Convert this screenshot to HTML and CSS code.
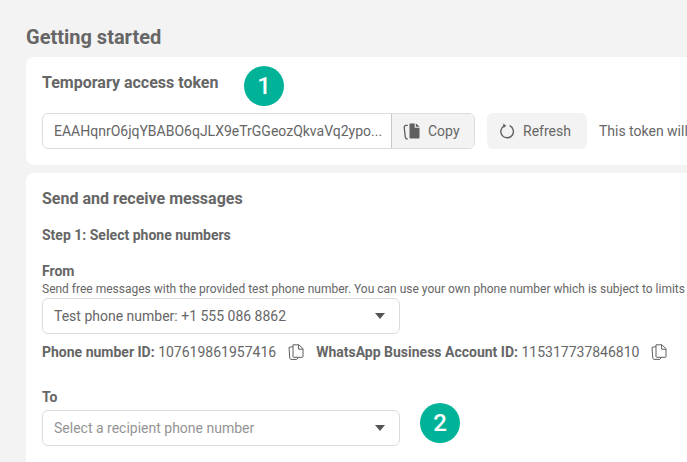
FILE: index.html
```html
<!DOCTYPE html>
<html lang="en">
<head>
    <meta charset="UTF-8">
    <meta name="viewport" content="width=device-width, initial-scale=1.0">
    <title>Getting started</title>
    <link rel="stylesheet" href="styles.css">
</head>
<body>
    <div class="page">
        <h1 class="page-title">Getting started</h1>

        <section class="card token-card">
            <h2 class="card-title">Temporary access token</h2>
            <div class="token-row">
                <div class="token-group">
                    <div class="token-value">EAAHqnrO6jqYBABO6qJLX9eTrGGeozQkvaVq2ypo...</div>
                    <button class="copy-btn">
                        <svg class="btn-icon" width="18" height="18" viewBox="0 0 18 18">
                            <path d="M6.5 1.5h5.2v4.2h4.8V15.5a1 1 0 0 1-1 1H7.5a1 1 0 0 1-1-1z" fill="#5f5f5f"/>
                            <path d="M12.8 1.2l3.9 3.5h-3.9z" fill="#5f5f5f"/>
                            <path d="M4.8 3.4H2.4L1.2 5l1.1 10.2 1 1.6h1.5" fill="none" stroke="#5f5f5f" stroke-width="1.3"/>
                        </svg>
                        Copy
                    </button>
                </div>
                <button class="refresh-btn">
                    <svg class="btn-icon" width="16" height="16" viewBox="0 0 16 16">
                        <path d="M5.2 2.9A6.3 6.3 0 1 0 10.6 2.7" fill="none" stroke="#5f5f5f" stroke-width="1.4"/>
                        <path d="M4.2 0.6l3 2.1-2.6 2.3z" fill="#5f5f5f"/>
                    </svg>
                    Refresh
                </button>
                <span class="token-note">This token will</span>
            </div>
            <div class="badge badge-one">1</div>
        </section>

        <section class="card send-card">
            <h2 class="card-title">Send and receive messages</h2>
            <h3 class="step-title">Step 1: Select phone numbers</h3>

            <label class="field-label from-label">From</label>
            <p class="field-help">Send free messages with the provided test phone number. You can use your own phone number which is subject to limits</p>
            <div class="select">
                <span>Test phone number: +1 555 086 8862</span>
                <span class="caret"></span>
            </div>

            <div class="id-row">
                <span class="id-item"><b>Phone number ID:</b> 107619861957416</span>
                <svg class="id-icon" width="16" height="16" viewBox="0 0 16 16">
                    <path d="M5 .8h6l4 4v7.8a.7.7 0 0 1-.7.7H5.7a.7.7 0 0 1-.7-.7z" fill="none" stroke="#5f5f5f" stroke-linejoin="round"/>
                    <path d="M10.6 .8v4.4h4.4" fill="none" stroke="#5f5f5f"/>
                    <path d="M5 2.6L1 3.4l.8 10.8.9 1.2h6l1.6-2" fill="none" stroke="#5f5f5f" stroke-linejoin="round"/>
                </svg>
                <span class="id-item"><b>WhatsApp Business Account ID:</b> 115317737846810</span>
                <svg class="id-icon" width="16" height="16" viewBox="0 0 16 16">
                    <path d="M5 .8h6l4 4v7.8a.7.7 0 0 1-.7.7H5.7a.7.7 0 0 1-.7-.7z" fill="none" stroke="#5f5f5f" stroke-linejoin="round"/>
                    <path d="M10.6 .8v4.4h4.4" fill="none" stroke="#5f5f5f"/>
                    <path d="M5 2.6L1 3.4l.8 10.8.9 1.2h6l1.6-2" fill="none" stroke="#5f5f5f" stroke-linejoin="round"/>
                </svg>
            </div>

            <label class="field-label to-label">To</label>
            <div class="select placeholder">
                <span>Select a recipient phone number</span>
                <span class="caret"></span>
            </div>
            <div class="badge badge-two">2</div>
        </section>
    </div>
</body>
</html>
```

FILE: styles.css
```css
html, body {
    height: 100%;
    margin: 0;
    overflow: hidden;
}

body {
    background-color: #f3f3f3;
    font-family: Roboto, "Liberation Sans", sans-serif;
    color: #666;
    font-size: 14px;
}

.page {
    display: flex;
    flex-direction: column;
    height: 100%;
    box-sizing: border-box;
    padding: 26px 0 0 26px;
}

.page-title {
    margin: 0 0 8px;
    font-size: 20px;
    line-height: 23px;
    font-weight: 700;
}

.card {
    position: relative;
    background-color: #fff;
    border-radius: 8px 0 0 8px;
    padding: 16px;
}

.token-card {
    height: 108px;
    box-sizing: border-box;
    margin-bottom: 8px;
}

.send-card {
    flex: 1;
    border-bottom-left-radius: 0;
}

.card-title {
    margin: 0;
    font-size: 16px;
    line-height: 20px;
    font-weight: 700;
}

.token-row {
    display: flex;
    align-items: center;
    margin-top: 20px;
}

.token-group {
    display: flex;
    flex: none;
    width: 433px;
    height: 36px;
    box-sizing: border-box;
    border: 1px solid #dcdcdc;
    border-radius: 6px;
    overflow: hidden;
}

.token-value {
    flex: 1;
    padding-left: 11px;
    line-height: 34px;
    white-space: nowrap;
}

.copy-btn, .refresh-btn {
    display: flex;
    flex: none;
    align-items: center;
    border: none;
    color: #666;
    font-family: inherit;
    font-size: 14px;
    background-color: #f3f3f3;
}

.copy-btn {
    gap: 7px;
    width: 83px;
    padding: 0 0 0 11px;
    border-left: 1px solid #c8c8c8;
}

.refresh-btn {
    gap: 8px;
    height: 36px;
    margin-left: 12px;
    padding: 0 16px 0 12px;
    border-radius: 6px;
}

.token-note {
    margin-left: 12px;
    white-space: nowrap;
}

.step-title {
    margin: 16px 0 0;
    font-size: 14px;
    line-height: 20px;
    font-weight: 700;
}

.field-label {
    display: block;
    font-size: 14px;
    line-height: 16px;
    font-weight: 700;
}

.from-label {
    margin-top: 18px;
}

.to-label {
    margin-top: 28px;
}

.field-help {
    margin: 3px 0 1px;
    font-size: 12px;
    line-height: 15px;
    white-space: nowrap;
}

.to-label + .select {
    margin-top: 5px;
}

.select {
    display: flex;
    align-items: center;
    justify-content: space-between;
    width: 358px;
    height: 36px;
    box-sizing: border-box;
    padding: 0 14px 0 11px;
    border: 1px solid #dcdcdc;
    border-radius: 6px;
}

.placeholder {
    color: #949494;
}

.caret {
    width: 0;
    height: 0;
    border-left: 5.5px solid transparent;
    border-right: 5.5px solid transparent;
    border-top: 6px solid #555;
}

.id-row {
    display: flex;
    align-items: center;
    margin-top: 9px;
    line-height: 18px;
}

.id-item {
    flex: none;
    white-space: nowrap;
}

.id-icon {
    flex: none;
    margin: 0 12px;
}

.badge {
    position: absolute;
    width: 40px;
    height: 40px;
    border-radius: 50%;
    background-color: #00b398;
    color: #fff;
    font-size: 24px;
    font-weight: 500;
    line-height: 40px;
    text-align: center;
}

.badge-one {
    left: 218px;
    top: 9px;
}

.badge-two {
    left: 394px;
    top: 230px;
}
```
